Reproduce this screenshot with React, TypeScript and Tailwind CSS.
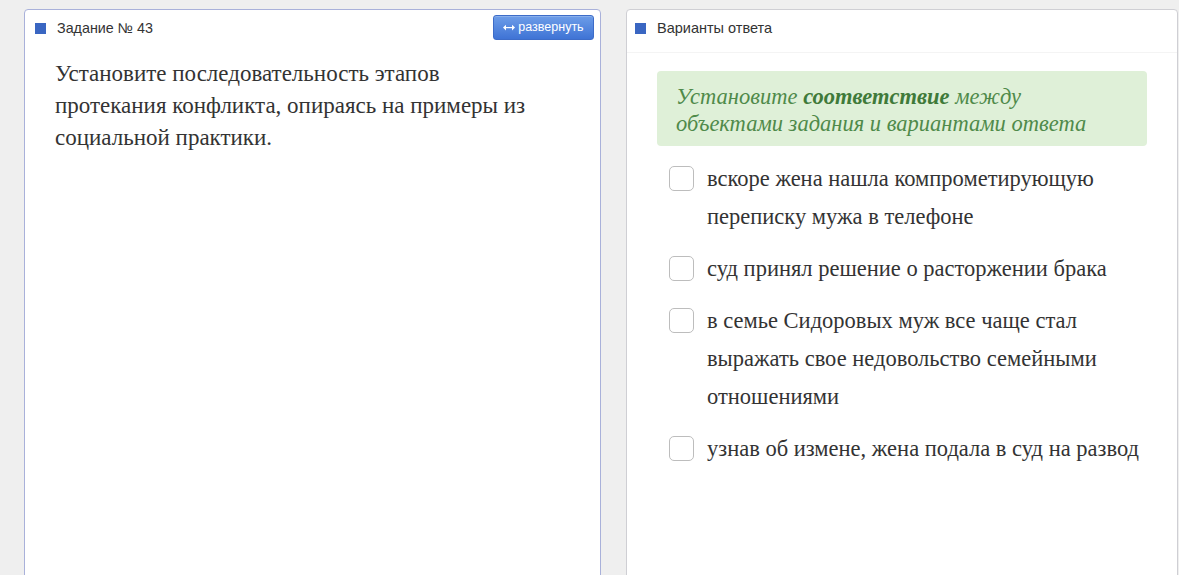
import React from "react";

const options = [
  "вскоре жена нашла компрометирующую переписку мужа в телефоне",
  "суд принял решение о расторжении брака",
  "в семье Сидоровых муж все чаще стал выражать свое недовольство семейными отношениями",
  "узнав об измене, жена подала в суд на развод",
];

function Square() {
  return <div className="w-[11px] h-[11px] bg-[#3a66c2] shrink-0" />;
}

export default function App() {
  return (
    <div className="h-[575px] overflow-hidden bg-[#efefef] flex pl-[24px] pt-[9px] gap-[25px] font-['Liberation_Sans',sans-serif]">
      {/* Left panel */}
      <div className="w-[577px] h-[620px] shrink-0 bg-white border border-[#a9b1da] rounded-t-[4px] flex flex-col">
        <div className="h-[43px] flex items-start justify-between pl-[10px] pr-[6px]">
          <div className="flex items-center gap-[11px] pt-[10px]">
            <Square />
            <span className="text-[14.3px] leading-[17px] text-[#333]">Задание № 43</span>
          </div>
          <button className="mt-[5px] h-[25px] w-[101px] rounded-[3px] border border-[#3d6cc8] bg-gradient-to-b from-[#6d9de8] to-[#3f73d5] text-white text-[12.5px] flex items-center justify-center gap-[3px] shadow-[inset_0_1px_0_rgba(255,255,255,0.2)]">
            <svg width="12" height="7" viewBox="0 0 12 7" fill="white">
              <rect x="2" y="3" width="8" height="1.2" />
              <path d="M0 3.6 L3 0.8 L3 6.4 Z" />
              <path d="M12 3.6 L9 0.8 L9 6.4 Z" />
            </svg>
            <span>развернуть</span>
          </button>
        </div>
        <div className="pl-[30px] pt-[5px] w-[510px] font-['Liberation_Serif',serif] text-[23px] leading-[32px] text-[#333]">
          Установите последовательность этапов протекания конфликта, опираясь на примеры из социальной практики.
        </div>
      </div>

      {/* Right panel */}
      <div className="w-[552px] h-[620px] shrink-0 bg-white border border-[#cfcfd4] rounded-t-[4px] flex flex-col">
        <div className="h-[43px] flex items-start pl-[8px] border-b border-[#f4f4f4]">
          <div className="flex items-center gap-[11px] pt-[10px]">
            <Square />
            <span className="text-[14.5px] leading-[17px] text-[#333]">Варианты ответа</span>
          </div>
        </div>
        <div className="px-[30px] pt-[18px] font-['Liberation_Serif',serif]">
          <div className="bg-[#dff0d8] rounded-[4px] pl-[19px] pr-[12px] pt-[12px] pb-[9px] text-[22.5px] leading-[27px] italic text-[#4f8a4a]">
            Установите <b className="font-bold text-[#3f7a3a]">соответствие</b> между
            <br />
            объектами задания и вариантами ответа
          </div>
          <div className="pt-[14px] flex flex-col gap-[14px]">
            {options.map((t, i) => (
              <div key={i} className="flex items-start pl-[12px]">
                <div className="mt-[6px] w-[25px] h-[25px] rounded-[5px] border border-[#bdbdbd] bg-white shrink-0" />
                <div className="ml-[13px] text-[22.5px] leading-[38px] text-[#333]">{t}</div>
              </div>
            ))}
          </div>
        </div>
      </div>
    </div>
  );
}
